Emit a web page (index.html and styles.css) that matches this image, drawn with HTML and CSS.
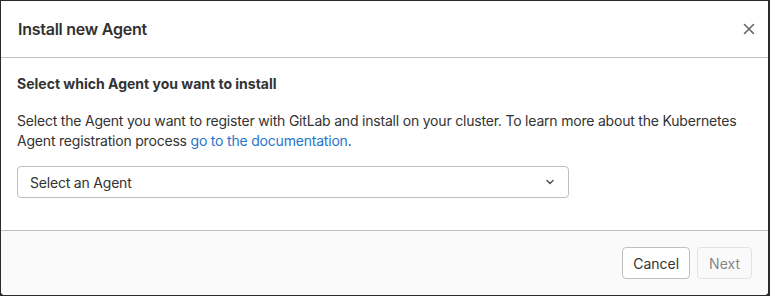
FILE: index.html
```html
<!DOCTYPE html>
<html lang="en">
<head>
  <meta charset="UTF-8">
  <title>Install new Agent</title>
  <link rel="stylesheet" href="styles.css">
</head>
<body>
  <div class="modal">
    <header class="modal-header">
      <h4 class="modal-title">Install new Agent</h4>
      <button class="close" aria-label="Close">
        <svg width="16" height="16" viewBox="0 0 16 16"><path d="M3.5 3.5l9 9M12.5 3.5l-9 9" stroke="#666" stroke-width="1.6" stroke-linecap="round"/></svg>
      </button>
    </header>

    <div class="modal-body">
      <h5 class="section-title">Select which Agent you want to install</h5>
      <p class="help">Select the Agent you want to register with GitLab and install on your cluster. To learn more about the Kubernetes Agent registration process <a href="#">go to the documentation</a>.</p>
      <div class="dropdown">
        <span>Select an Agent</span>
        <svg width="12" height="12" viewBox="0 0 16 16"><path d="M4 6l4 4 4-4" fill="none" stroke="#555" stroke-width="2" stroke-linecap="round" stroke-linejoin="round"/></svg>
      </div>
    </div>

    <footer class="modal-footer">
      <button class="btn">Cancel</button>
      <button class="btn disabled">Next</button>
    </footer>
  </div>
</body>
</html>
```

FILE: styles.css
```css
html, body {
  height: 100%;
}

body {
  margin: 0;
  background: #2a2a2a;
  font-family: Inter, "Liberation Sans", sans-serif;
  color: #333;
  font-size: 14px;
  letter-spacing: -0.2px;
}

.modal {
  margin: 1px 2px 0 1px;
  height: 294px;
  background: #fff;
  border-radius: 0 0 4px 4px;
  display: flex;
  flex-direction: column;
  overflow: hidden;
}

.modal-header {
  height: 56px;
  border-bottom: 1px solid #bfbfbf;
  display: flex;
  align-items: center;
  justify-content: space-between;
  padding: 0 11px 0 17px;
}

.modal-title {
  margin: 0;
  font-size: 16px;
  font-weight: 600;
  color: #303030;
  letter-spacing: -0.25px;
}

.close {
  background: none;
  border: none;
  padding: 0;
  display: flex;
  cursor: pointer;
}

.modal-body {
  flex: 1;
  padding: 16px 16px 0;
}

.section-title {
  margin: 0 0 17px;
  font-size: 14px;
  font-weight: 700;
  line-height: 20px;
  letter-spacing: 0;
}

.help {
  margin: 0 0 15px;
  line-height: 20px;
}

.help a {
  color: #1f75cb;
  text-decoration: none;
}

.dropdown {
  width: 526px;
  height: 30px;
  border: 1px solid #bfbfbf;
  border-radius: 4px;
  display: flex;
  align-items: center;
  justify-content: space-between;
  padding: 0 12px;
}

.modal-footer {
  height: 64px;
  background: #fafafa;
  border-top: 1px solid #bfbfbf;
  display: flex;
  align-items: center;
  justify-content: flex-end;
  gap: 7px;
  padding: 0 16px 0 0;
}

.btn {
  height: 32px;
  padding: 0 10px;
  border: 1px solid #bfbfbf;
  border-radius: 4px;
  background: #fff;
  font: inherit;
  color: #333;
}

.btn.disabled {
  padding: 0 11px;
  background: #fafafa;
  border-color: #e3e3e3;
  color: #888;
}
```
